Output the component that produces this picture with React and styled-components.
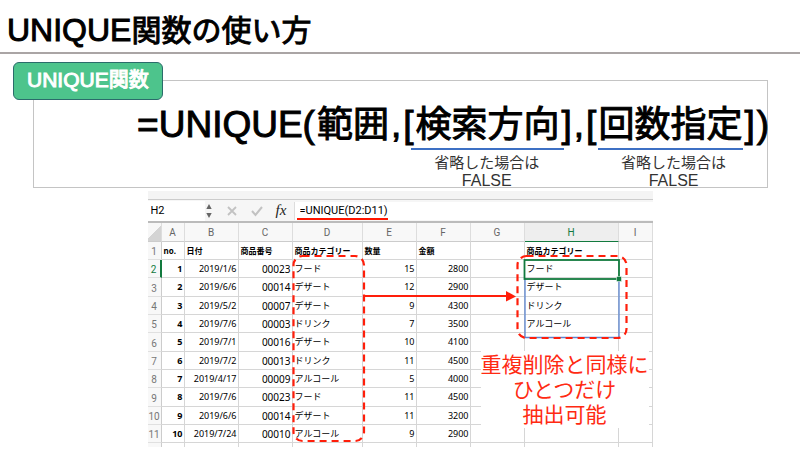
import styled, { createGlobalStyle } from 'styled-components';

const rows = [
    [1, '2019/1/6', '00023', 'フード', 15, 2800, 'フード'],
    [2, '2019/6/6', '00014', 'デザート', 12, 2900, 'デザート'],
    [3, '2019/5/2', '00007', 'デザート', 9, 4300, 'ドリンク'],
    [4, '2019/7/6', '00003', 'ドリンク', 7, 3500, 'アルコール'],
    [5, '2019/7/1', '00016', 'デザート', 10, 4100, ''],
    [6, '2019/7/2', '00013', 'ドリンク', 11, 4500, ''],
    [7, '2019/4/17', '00009', 'アルコール', 5, 4000, ''],
    [8, '2019/7/6', '00023', 'フード', 11, 4500, ''],
    [9, '2019/6/6', '00014', 'デザート', 11, 3200, ''],
    [10, '2019/7/24', '00010', 'アルコール', 9, 2900, ''],
];

const labels = ['no.', '日付', '商品番号', '商品カテゴリー', '数量', '金額', '', '商品カテゴリー', ''];

const columns = [
    { name: 'A', width: 23 },
    { name: 'B', width: 54 },
    { name: 'C', width: 54 },
    { name: 'D', width: 70 },
    { name: 'E', width: 54 },
    { name: 'F', width: 54 },
    { name: 'G', width: 54 },
    { name: 'H', width: 94 },
    { name: 'I', width: 34 },
];

const OptionalArg = ({ children, inset }) => (
    <Arg>
        <Latin>[</Latin>
        <span>{children}</span>
        <Latin>]</Latin>
        <Note $inset={inset}>
            <NoteText>
                <span>省略した場合は</span>
                <NoteValue>FALSE</NoteValue>
            </NoteText>
        </Note>
    </Arg>
);

const App = () => {
    return (
        <>
            <GlobalStyle />
            <Header>
                <Title>
                    <Latin $size={32}>UNIQUE</Latin>関数の使い方
                </Title>
            </Header>
            <main>
                <Syntax>
                    <Badge>
                        <Latin $size={21}>UNIQUE</Latin>関数
                    </Badge>
                    <Formula>
                        <Latin>=UNIQUE(</Latin>
                        <span>範囲</span>
                        <Latin>,</Latin>
                        <OptionalArg inset={8}>検索方向</OptionalArg>
                        <Latin>,</Latin>
                        <OptionalArg inset={12}>回数指定</OptionalArg>
                        <Latin>)</Latin>
                    </Formula>
                </Syntax>
                <Sheet>
                    <Ribbon />
                    <FormulaBar>
                        <NameBox aria-label='セル名' defaultValue='H2' />
                        <Tools>
                            <svg width='8' height='16' viewBox='0 0 8 16' fill='#666'>
                                <path d='M4 1 6.700 6H1.300zM4 15 1.300 10h5.400z' />
                            </svg>
                            <svg width='12' height='12' viewBox='0 0 12 12' fill='none' stroke='#c2c2c2' strokeWidth='1.8'>
                                <path d='m2 2 8 8M10 2 2 10' />
                            </svg>
                            <svg width='12' height='12' viewBox='0 0 12 12' fill='none' stroke='#c2c2c2' strokeWidth='2'>
                                <path d='m1 6 3.500 4L11 2' />
                            </svg>
                            <Fx>fx</Fx>
                        </Tools>
                        <FormulaInput aria-label='数式' defaultValue='=UNIQUE(D2:D11)' />
                    </FormulaBar>
                    <Table>
                        <colgroup>
                            <Col $width={14} />
                            {columns.map(({ name, width }) => (
                                <Col key={name} $width={width} />
                            ))}
                        </colgroup>
                        <thead>
                            <tr>
                                <ColHead $corner />
                                {columns.map(({ name }) => (
                                    <ColHead key={name} $active={name === 'H'}>
                                        {name}
                                    </ColHead>
                                ))}
                            </tr>
                        </thead>
                        <tbody>
                            <tr>
                                <RowHead>1</RowHead>
                                {labels.map((label, i) => (
                                    <Cell key={i} $bold $size={8}>
                                        {label}
                                    </Cell>
                                ))}
                            </tr>
                            {rows.map(([no, date, code, category, count, price, unique], i) => (
                                <tr key={no}>
                                    <RowHead $active={i === 0}>{i + 2}</RowHead>
                                    <Cell $bold $right>
                                        {no}
                                    </Cell>
                                    <Cell $right>{date}</Cell>
                                    <Cell $right $size={10}>
                                        {code}
                                    </Cell>
                                    <Cell>{category}</Cell>
                                    <Cell $right>{count}</Cell>
                                    <Cell $right>{price}</Cell>
                                    <Cell />
                                    <Cell>{unique}</Cell>
                                    <Cell />
                                </tr>
                            ))}
                            <LastRow>
                                <RowHead />
                                {columns.map(({ name }) => (
                                    <Cell key={name} />
                                ))}
                            </LastRow>
                        </tbody>
                    </Table>
                    <Marks viewBox='0 0 505 256' fill='none'>
                        <path d='M377 87v59.500h94V87' stroke='#5b84cf' strokeWidth='1.300' />
                        <rect x='376.500' y='69' width='94.500' height='19' stroke='#127a3e' strokeWidth='1.800' />
                        <rect x='468.500' y='85.500' width='5' height='5' fill='#127a3e' stroke='#fff' strokeWidth='.5' />
                        <path d='M149 28h91' stroke='#ff1500' strokeWidth='2' />
                        <g stroke='#ff1e0a' strokeWidth='2.200'>
                            <rect x='145.500' y='65' width='70.500' height='185' rx='9' strokeDasharray='7 5' />
                            <rect x='369.500' y='65' width='109' height='82' rx='9' strokeDasharray='7 5' />
                        </g>
                        <path d='M217 105h142' stroke='#ff1e0a' strokeWidth='1.800' />
                        <path d='m358 100 10 5.500-10 5z' fill='#ff1e0a' />
                    </Marks>
                    <Callout>
                        <span>重複削除と同様に</span>
                        <span>ひとつだけ</span>
                        <span>抽出可能</span>
                    </Callout>
                </Sheet>
            </main>
        </>
    );
};

export default App;

const GlobalStyle = createGlobalStyle`
    * {
        box-sizing: border-box;
    }
    body {
        margin: 0;
        background: #fff;
        color: #000;
        font-family: 'Noto Sans CJK JP', sans-serif;
    }
`;

const Header = styled.header`
    height: 54px;
    padding: 5px 7px 0;
    border-bottom: 2px solid #aaa5a5;
`;

const Title = styled.h1`
    margin: 0;
    font-size: 30px;
    font-weight: 400;
    line-height: 46px;
    white-space: nowrap;
    -webkit-text-stroke: 1px currentColor;
`;

const Latin = styled.span`
    font-family: 'Liberation Sans', sans-serif;
    font-size: ${({ $size = 37 }) => $size}px;
    line-height: 1;
`;

const Syntax = styled.section`
    position: relative;
    height: 108px;
    margin: 26px 32px 0 33px;
    border: 1px solid #c4c4c4;
`;

const Badge = styled.h2`
    position: absolute;
    top: -19px;
    left: -21px;
    margin: 0;
    padding: 0 13px;
    height: 38px;
    border: 1px solid #2b6b6b;
    border-radius: 6px;
    background: #4dc48c;
    color: #fff;
    font-size: 20px;
    font-weight: 400;
    line-height: 31px;
    white-space: nowrap;
    -webkit-text-stroke: 1px currentColor;
`;

const Formula = styled.div`
    display: flex;
    justify-content: flex-end;
    align-items: baseline;
    gap: 2px;
    margin-right: -2px;
    padding-top: 13px;
    font-size: 36px;
    line-height: 54px;
    white-space: nowrap;
    -webkit-text-stroke: 1px currentColor;
`;

const Arg = styled.span`
    position: relative;
    display: flex;
    align-items: baseline;
    gap: 2px;
`;

const Note = styled.small`
    position: absolute;
    top: 54px;
    left: ${({ $inset }) => $inset}px;
    right: ${({ $inset }) => $inset}px;
    padding: 2px 0 0 23px;
    border-top: 2px solid #3d70c4;
    color: #333;
    font-size: 15px;
    line-height: 19px;
    -webkit-text-stroke: 0;
`;

const NoteText = styled.span`
    display: inline-flex;
    flex-direction: column;
    align-items: center;
`;

const NoteValue = styled.span`
    font-family: 'Liberation Sans', sans-serif;
    font-size: 16px;
`;

const Sheet = styled.section`
    position: relative;
    width: 505px;
    margin: 3px auto 0;
`;

const Ribbon = styled.div`
    height: 9px;
    background: #f4f4f4;
    border-bottom: 1px solid #ccc;
`;

const FormulaBar = styled.div`
    display: flex;
    align-items: center;
    height: 23px;
    background: #f6f6f6;
    border-bottom: 2px solid #bbb;
`;

const NameBox = styled.input`
    width: 57px;
    height: 20px;
    padding: 0 3px;
    border: 0;
    font: 11px Roboto, sans-serif;
`;

const Tools = styled.div`
    display: flex;
    align-items: center;
    gap: 13px;
    flex: 0 0 89px;
`;

const Fx = styled.i`
    color: #222;
    font: italic 15px 'Liberation Serif', serif;
`;

const FormulaInput = styled.input`
    flex: 1;
    min-width: 0;
    height: 18px;
    padding: 0 5px;
    border: 0;
    border-left: 1px solid #ddd;
    font: 11px Roboto, sans-serif;
`;

const Table = styled.table`
    width: 100%;
    table-layout: fixed;
    border-collapse: separate;
    border-spacing: 0;

    & tbody tr {
        height: 18px;
    }
    & tbody tr:nth-child(3n) {
        height: 19px;
    }
`;

const Col = styled.col`
    width: ${({ $width }) => $width}px;
`;

const ColHead = styled.th`
    height: 19px;
    padding: 0;
    border-right: 1px solid #ddd;
    border-bottom: 1px solid ${({ $active }) => ($active ? '#127a3e' : '#ccc')};
    background: ${({ $active, $corner }) =>
        $corner ? 'linear-gradient(135deg, #f7f7f7 50%, #d4d4d4 50%)' : $active ? '#eee' : '#f8f8f8'};
    color: ${({ $active }) => ($active ? '#127a3e' : '#666')};
    font: 10px Roboto, sans-serif;
`;

const RowHead = styled.th`
    padding: 3px 0 0;
    border-right: ${({ $active }) => ($active ? '2px solid #127a3e' : '1px solid #ccc')};
    border-bottom: 1px solid #e0e0e0;
    background: #f8f8f8;
    color: ${({ $active }) => ($active ? '#127a3e' : '#777')};
    font: 10px/14px Roboto, sans-serif;
`;

const Cell = styled.td`
    padding: 0 1px 0 2px;
    border-right: 1px solid #d6d6d6;
    border-bottom: 1px solid #d6d6d6;
    font-family: 'Noto Sans', 'Noto Sans CJK JP', sans-serif;
    font-size: ${({ $size = 9 }) => $size}px;
    font-weight: ${({ $bold }) => ($bold ? 700 : 400)};
    line-height: 14px;
    text-align: ${({ $right }) => ($right ? 'right' : 'left')};
    white-space: nowrap;
`;

const LastRow = styled.tr`
    &&& {
        height: 4px;
    }
    &&& > * {
        padding: 0;
        border-bottom: 0;
        line-height: 0;
    }
`;

const Marks = styled.svg`
    position: absolute;
    top: 0;
    left: 0;
    width: 100%;
    pointer-events: none;
`;

const Callout = styled.p`
    position: absolute;
    top: 160px;
    right: 4px;
    display: flex;
    flex-direction: column;
    align-items: center;
    margin: 0;
    padding-bottom: 2px;
    background: #fff;
    color: #ff2a12;
    font-size: 21px;
    line-height: 25px;
    white-space: nowrap;
`;
